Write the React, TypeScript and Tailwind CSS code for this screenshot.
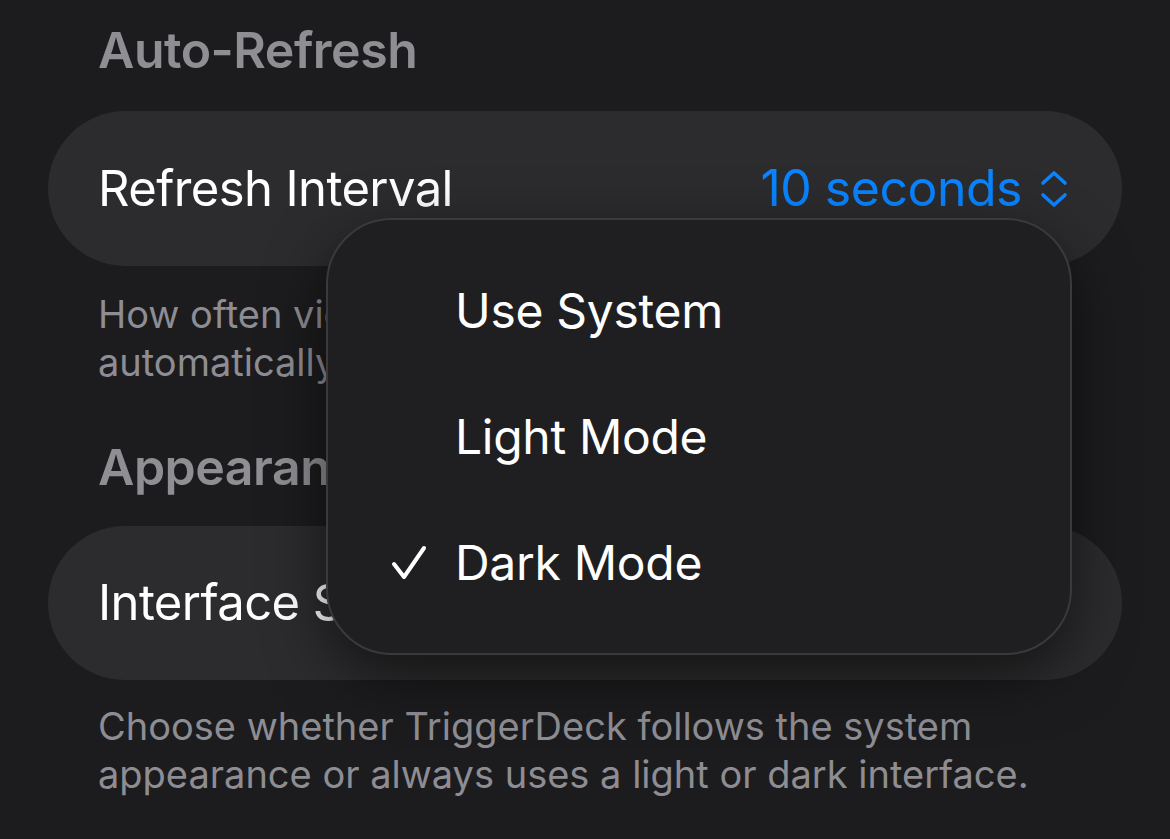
import React from "react";

const font = { fontFamily: "Inter, 'Noto Sans', sans-serif" };

function UpDownIcon() {
  return (
    <svg width="28" height="38" viewBox="0 0 28 38" fill="none" stroke="#0a84ff" strokeWidth="3.6" strokeLinecap="round" strokeLinejoin="round">
      <path d="M3 13 L14 3 L25 13" />
      <path d="M3 25 L14 35 L25 25" />
    </svg>
  );
}

function CheckIcon() {
  return (
    <svg width="38" height="38" viewBox="0 0 38 38" fill="none" stroke="#ffffff" strokeWidth="4" strokeLinecap="round" strokeLinejoin="round">
      <path d="M4 20 L14 33 L34 4" />
    </svg>
  );
}

const options = [
  { label: "Use System", checked: false },
  { label: "Light Mode", checked: false },
  { label: "Dark Mode", checked: true },
];

export default function App() {
  return (
    <div className="relative w-[1170px] h-[839px] overflow-hidden bg-[#1c1c1e]" style={font}>
      <div className="px-[48px] pt-[20px]">
        {/* Auto-Refresh section */}
        <h2 className="pl-[50px] text-[50px] leading-[60px] font-semibold text-[#8e8e93] tracking-[-0.5px]">
          Auto-Refresh
        </h2>
        <div className="mt-[31px] h-[155px] rounded-full bg-[#2c2c2e] flex items-center justify-between pl-[50px] pr-[54px]">
          <span className="text-[49px] text-white tracking-[-0.6px]">Refresh Interval</span>
          <span className="flex items-center gap-[18px] text-[50px] text-[#0a84ff] tracking-[-0.5px]">
            10 seconds
            <UpDownIcon />
          </span>
        </div>
        <p className="pl-[50px] pt-[24px] text-[38px] leading-[48px] text-[#8d8d93]">
          How often views refresh their data
          <br />
          automatically
        </p>

        {/* Appearance section */}
        <h2 className="mt-[51px] pl-[50px] text-[50px] leading-[60px] font-semibold text-[#8e8e93] tracking-[-0.5px]">
          Appearance
        </h2>
        <div className="mt-[29px] h-[154px] rounded-full bg-[#2c2c2e] flex items-center pl-[50px]">
          <span className="text-[49px] text-white tracking-[-0.6px]">Interface Style</span>
        </div>
        <p className="pl-[50px] pt-[22px] text-[38px] leading-[48px] text-[#8d8d93]">
          Choose whether TriggerDeck follows the system
          <br />
          appearance or always uses a light or dark interface.
        </p>
      </div>

      {/* Popup menu */}
      <div className="absolute left-[326px] top-[218px] w-[746px] h-[437px] rounded-[66px] bg-[#1f1f21] border-[2px] border-[#3a3a3c] shadow-[0_20px_60px_rgba(0,0,0,0.55)] flex flex-col justify-center gap-[78px] pl-[62px]">
        {options.map((o) => (
          <div key={o.label} className="flex items-center h-[48px]">
            <span className="w-[65px] flex items-center">{o.checked && <CheckIcon />}</span>
            <span className="text-[48px] text-white tracking-[-0.3px]">{o.label}</span>
          </div>
        ))}
      </div>
    </div>
  );
}
